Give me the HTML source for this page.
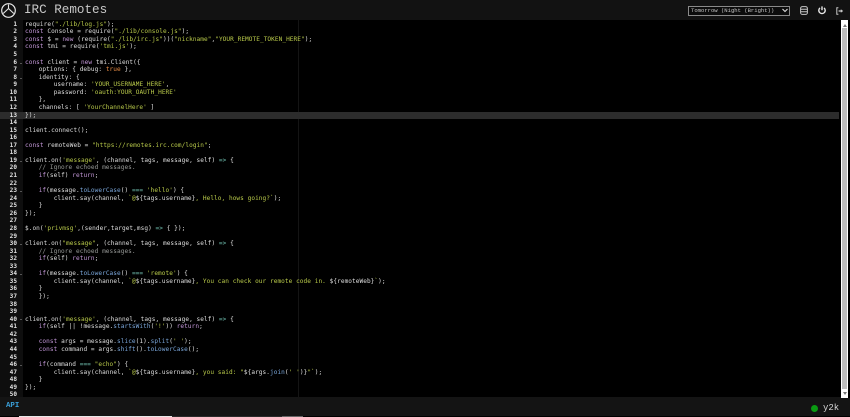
<!DOCTYPE html>
<html><head><meta charset="utf-8"><style>
html,body{margin:0;padding:0;background:#000;width:850px;height:417px;overflow:hidden}
body{position:relative;font-family:"Liberation Mono",monospace}
#hdr{position:absolute;left:0;top:0;width:850px;height:20px;background:#121212}
#title{position:absolute;left:24px;top:2px;font-size:12.6px;line-height:16px;color:#c8c8c8;white-space:pre;filter:blur(.25px)}
#sel{position:absolute;left:688px;top:6px;width:100px;height:8px;border:1px solid #8a8a8a;background:#0c0c0c;color:#c4c4c4;font-size:5.55px;line-height:8px;white-space:pre;box-sizing:content-box;text-indent:2px;filter:blur(.25px)}
#gut{position:absolute;left:0;top:20px;width:23px;height:377px;background:#0e0e0e}
#pm{position:absolute;left:298px;top:20px;width:1px;height:377px;background:#141414}
#al{position:absolute;left:0;top:111.5px;width:839px;height:7.5px;background:#2c2c2c}
#nums,#code{position:absolute;top:20.8px;margin:0;font-size:6.1px;line-height:7.56px;white-space:pre;height:376px;overflow:hidden;filter:blur(.35px)}
#nums{left:0;width:17px;text-align:right;color:#e0e0e0;font-weight:bold}
#code{left:25px;width:814px;color:#dedede;letter-spacing:.06px}
.i4,.i8{display:inline-block;height:1px}
.i4{width:13.7px}.i8{width:28.7px}
.k{color:#c397d8}.s{color:#b9ca4a}.c{color:#969896}.f{color:#7aa6da}.n{color:#e78c45}.o{color:#70c0b1}
.fold{position:absolute;left:19.5px;width:2px;height:1px;background:#555}
#sb{position:absolute;left:841px;top:20px;width:7px;height:378px;background:#fff}
#sb i{position:absolute;left:1px;top:8px;width:5px;height:361px;background:#bdbdbd}
#sb b{position:absolute;left:1.5px;width:0;height:0;border-left:2px solid transparent;border-right:2px solid transparent}
#ftr{position:absolute;left:0;top:397px;width:841px;height:19px;background:#141414}
#ftr2{position:absolute;left:841px;top:398px;width:9px;height:18px;background:#141414}
#api{position:absolute;left:6px;top:401.5px;font-size:7.4px;line-height:9px;color:#3a9fd8;font-weight:bold;filter:blur(.2px)}
#dot{position:absolute;left:811px;top:405px;width:7px;height:7px;border-radius:50%;background:#0a9a12}
#usr{position:absolute;left:823px;top:402px;font-size:9px;line-height:12px;color:#d5d5d5;filter:blur(.2px)}
.bb{position:absolute;top:416px;height:1px}
svg{position:absolute}
</style></head><body>
<div id="hdr"></div>
<svg style="left:0;top:2px" width="17" height="17" viewBox="0 0 17 17" fill="none" stroke="#e6e6e6"><circle cx="8.5" cy="8.5" r="6.8" stroke-width="1.2"/><path d="M8.5 2.5L8.5 6.5L3.2 11.5M8.5 6.5L13.8 11.5" stroke-width="1.1"/></svg>
<div id="title">IRC Remotes</div>
<div id="sel">Tomorrow (Night (Bright))</div>
<svg style="left:782px;top:8px" width="6" height="5" viewBox="0 0 6 5" fill="none" stroke="#ddd" stroke-width="1.1"><path d="M.5 1L3 3.5L5.5 1"/></svg>
<svg style="left:800px;top:6px" width="8" height="9" viewBox="0 0 8 9" fill="none" stroke="#c8c8c8" stroke-width="1"><rect x=".6" y=".6" width="6.8" height="7.8" rx="1.8"/><path d="M.6 3.2H7.4M.6 5.8H7.4"/></svg>
<svg style="left:818px;top:6px" width="8" height="9" viewBox="0 0 8 9" fill="none" stroke="#e8e8e8" stroke-width="1.4"><path d="M4 .4V4.2"/><path d="M2 1.9A3.2 3.2 0 1 0 6 1.9"/></svg>
<svg style="left:836px;top:6.5px" width="8" height="8" viewBox="0 0 8 8" fill="none" stroke="#c8c8c8" stroke-width="1"><path d="M2.4 .8H.8V7.2H2.4"/><path d="M2.6 4H5" stroke-width="1.3"/><path d="M4.8 2.2L7.2 4L4.8 5.8Z" fill="#c8c8c8" stroke="none"/></svg>
<div id="gut"></div>
<div id="pm"></div>
<div id="al"></div>
<pre id="nums">1
2
3
4
5
6
7
8
9
10
11
12
13
14
15
16
17
18
19
20
21
22
23
24
25
26
27
28
29
30
31
32
33
34
35
36
37
38
39
40
41
42
43
44
45
46
47
48
49
50</pre>
<div class="fold" style="top:62.5px"></div>
<div class="fold" style="top:77.5px"></div>
<div class="fold" style="top:160.5px"></div>
<div class="fold" style="top:191px"></div>
<div class="fold" style="top:243.5px"></div>
<div class="fold" style="top:274px"></div>
<div class="fold" style="top:319px"></div>
<div class="fold" style="top:364.5px"></div>
<pre id="code">require(<span class="s">"./lib/log.js"</span>);
<span class="k">const</span> Console = require(<span class="s">"./lib/console.js"</span>);
<span class="k">const</span> $ = <span class="k">new</span> (require(<span class="s">"./lib/irc.js"</span>))(<span class="s">"nickname"</span>,<span class="s">"YOUR_REMOTE_TOKEN_HERE"</span>);
<span class="k">const</span> tmi = require(<span class="s">'tmi.js'</span>);

<span class="k">const</span> client = <span class="k">new</span> tmi.Client({
<span class="i4"></span>options: { debug: <span class="n">true</span> },
<span class="i4"></span>identity: {
<span class="i8"></span>username: <span class="s">'YOUR_USERNAME_HERE'</span>,
<span class="i8"></span>password: <span class="s">'oauth:YOUR_OAUTH_HERE'</span>
<span class="i4"></span>},
<span class="i4"></span>channels: [ <span class="s">'YourChannelHere'</span> ]
});

client.connect();

<span class="k">const</span> remoteWeb = <span class="s">"https://remotes.irc.com/login"</span>;

client.on(<span class="s">'message'</span>, (channel, tags, message, self) <span class="o">=&gt;</span> {
<span class="i4"></span><span class="c">// Ignore echoed messages.</span>
<span class="i4"></span><span class="k">if</span>(self) <span class="k">return</span>;

<span class="i4"></span><span class="k">if</span>(message.<span class="f">toLowerCase</span>() <span class="o">===</span> <span class="s">'hello'</span>) {
<span class="i8"></span>client.say(channel, <span class="s">`@</span>${tags.username}<span class="s">, Hello, hows going?`</span>);
<span class="i4"></span>}
});

$.on(<span class="s">'privmsg'</span>,(sender,target,msg) <span class="o">=&gt;</span> { });

client.on(<span class="s">"message"</span>, (channel, tags, message, self) <span class="o">=&gt;</span> {
<span class="i4"></span><span class="c">// Ignore echoed messages.</span>
<span class="i4"></span><span class="k">if</span>(self) <span class="k">return</span>;

<span class="i4"></span><span class="k">if</span>(message.<span class="f">toLowerCase</span>() <span class="o">===</span> <span class="s">'remote'</span>) {
<span class="i8"></span>client.say(channel, <span class="s">`@</span>${tags.username}<span class="s">, You can check our remote code in. </span>${remoteWeb}<span class="s">`</span>);
<span class="i4"></span>}
<span class="i4"></span>});


client.on(<span class="s">'message'</span>, (channel, tags, message, self) <span class="o">=&gt;</span> {
<span class="i4"></span><span class="k">if</span>(self || !message.<span class="f">startsWith</span>(<span class="s">'!'</span>)) <span class="k">return</span>;

<span class="i4"></span><span class="k">const</span> args = message.<span class="f">slice</span>(1).<span class="f">split</span>(<span class="s">' '</span>);
<span class="i4"></span><span class="k">const</span> command = args.<span class="f">shift</span>().<span class="f">toLowerCase</span>();

<span class="i4"></span><span class="k">if</span>(command <span class="o">===</span> <span class="s">"echo"</span>) {
<span class="i8"></span>client.say(channel, <span class="s">`@</span>${tags.username}<span class="s">, you said: "</span>${args.<span class="f">join</span>(<span class="s">' '</span>)}<span class="s">"`</span>);
<span class="i4"></span>}
});
</pre>
<div id="sb"><b style="top:3.5px;border-bottom:3px solid #777"></b><i></i><b style="top:372px;border-top:3px solid #777"></b></div>
<div id="ftr"></div>
<div id="ftr2"></div>
<div id="api">API</div>
<div id="dot"></div>
<div id="usr">y2k</div>
<div class="bb" style="left:19px;width:153px;background:#e8e8e8"></div>
<div class="bb" style="left:172px;width:110px;background:#2a2a2a"></div>
<div class="bb" style="left:282px;width:21px;background:#666"></div>
</body></html>
